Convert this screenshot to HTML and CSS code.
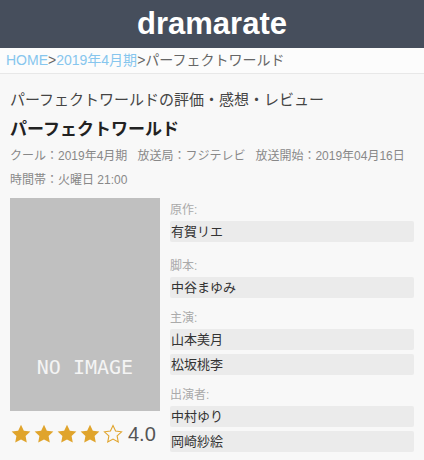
FILE: index.html
```html
<!DOCTYPE html>
<html lang="ja">
<head>
<meta charset="utf-8">
<title>dramarate</title>
<link rel="stylesheet" href="styles.css">
</head>
<body>
<header class="site-header">dramarate</header>
<nav class="breadcrumb"><a class="crumb-link" href="#">HOME</a><span class="sep">&gt;</span><a class="crumb-link" href="#">2019年4月期</a><span class="sep">&gt;</span><span class="crumb-current">パーフェクトワールド</span></nav>
<main class="main">
  <h1 class="page-title">パーフェクトワールドの評価・感想・レビュー</h1>
  <h2 class="drama-title">パーフェクトワールド</h2>
  <p class="meta"><span class="meta-item">クール：2019年4月期</span><span class="meta-item">放送局：フジテレビ</span><span class="meta-item">放送開始：2019年04月16日</span></p>
  <p class="meta">時間帯：火曜日 21:00</p>
  <div class="detail">
    <div class="left">
      <div class="noimage"><span class="noimage-text">NO IMAGE</span></div>
      <div class="rating">
        <div class="stars">
          <svg class="star" viewBox="0 0 24 24"><path class="star-fill" d="M12 1.8l3.1 6.6 7.1.9-5.2 5 1.3 7.1L12 18l-6.3 3.4L7 14.3l-5.2-5 7.1-.9z"/></svg>
          <svg class="star" viewBox="0 0 24 24"><path class="star-fill" d="M12 1.8l3.1 6.6 7.1.9-5.2 5 1.3 7.1L12 18l-6.3 3.4L7 14.3l-5.2-5 7.1-.9z"/></svg>
          <svg class="star" viewBox="0 0 24 24"><path class="star-fill" d="M12 1.8l3.1 6.6 7.1.9-5.2 5 1.3 7.1L12 18l-6.3 3.4L7 14.3l-5.2-5 7.1-.9z"/></svg>
          <svg class="star" viewBox="0 0 24 24"><path class="star-fill" d="M12 1.8l3.1 6.6 7.1.9-5.2 5 1.3 7.1L12 18l-6.3 3.4L7 14.3l-5.2-5 7.1-.9z"/></svg>
          <svg class="star" viewBox="0 0 24 24"><path class="star-line" d="M12 2.8l2.8 6 6.5.8-4.8 4.5 1.2 6.5L12 17.5l-5.7 3.1 1.2-6.5-4.8-4.5 6.5-.8z"/></svg>
        </div>
        <span class="score">4.0</span>
      </div>
    </div>
    <div class="right">
      <div class="group group-first">
        <div class="label">原作:</div>
        <div class="value">有賀リエ</div>
      </div>
      <div class="group">
        <div class="label">脚本:</div>
        <div class="value">中谷まゆみ</div>
      </div>
      <div class="group">
        <div class="label">主演:</div>
        <div class="value">山本美月</div>
        <div class="value">松坂桃李</div>
      </div>
      <div class="group">
        <div class="label">出演者:</div>
        <div class="value">中村ゆり</div>
        <div class="value">岡崎紗絵</div>
      </div>
    </div>
  </div>
</main>
</body>
</html>
```

FILE: styles.css
```css
* { box-sizing: border-box; }
html, body {
  margin: 0;
  padding: 0;
}
body {
  background: #f8f8f8;
  font-family: "Liberation Sans", "Noto Sans CJK JP", sans-serif;
  color: #333;
  overflow: hidden;
}
.site-header {
  height: 48px;
  line-height: 48px;
  background: #464e5c;
  color: #ffffff;
  text-align: center;
  font-size: 31px;
  font-weight: bold;
}
.breadcrumb {
  height: 26px;
  line-height: 25px;
  padding-left: 6px;
  font-size: 14px;
  background: #fcfcfc;
  border-bottom: 1px solid #e8e8e8;
  color: #666;
  white-space: nowrap;
}
.crumb-link {
  color: #86c6ee;
  text-decoration: none;
}
.sep { color: #666; }
.crumb-current { color: #666; }
.main {
  padding: 0 10px;
}
.page-title {
  margin: 16px 0 0;
  font-size: 15px;
  line-height: 20px;
  font-weight: normal;
  color: #444;
}
.drama-title {
  margin: 8px 0 0;
  font-size: 17px;
  line-height: 24px;
  font-weight: bold;
  color: #222;
}
.meta {
  margin: 0;
  font-size: 12px;
  line-height: 24px;
  color: #888;
  white-space: nowrap;
}
.meta-item { margin-right: 10px; }
.meta:first-of-type { margin-top: 2px; }
.detail {
  display: flex;
  gap: 10px;
  margin-top: 6px;
}
.left {
  width: 150px;
  flex: none;
}
.noimage {
  width: 150px;
  height: 213px;
  background: #c0c0c0;
  display: flex;
  align-items: flex-end;
  justify-content: center;
  padding-bottom: 34px;
}
.noimage-text {
  font-family: "DejaVu Sans Mono", monospace;
  font-size: 20px;
  line-height: 20px;
  color: #f4f4f4;
}
.rating {
  display: flex;
  align-items: center;
  margin-top: 11px;
  height: 24px;
}
.stars {
  display: flex;
  gap: 1px;
}
.star {
  width: 22px;
  height: 22px;
  display: block;
}
.star-fill { fill: #e0a42c; }
.star-line { fill: none; stroke: #e0a42c; stroke-width: 1.2; stroke-linejoin: miter; }
.score {
  margin-left: 4px;
  font-size: 20px;
  line-height: 24px;
  color: #555;
}
.right {
  flex: 1;
  padding-top: 4px;
}
.group { margin-top: 12px; }
.group-first { margin-top: 0; margin-bottom: 16px; }
.label {
  font-size: 12px;
  line-height: 17px;
  color: #aaa;
  margin-bottom: 2px;
}
.value {
  height: 21px;
  line-height: 21px;
  font-size: 13px;
  color: #333;
  background: #ebebeb;
  border-radius: 2px;
  padding: 0 1px;
  margin-bottom: 4px;
}
.value:last-child { margin-bottom: 0; }
```
